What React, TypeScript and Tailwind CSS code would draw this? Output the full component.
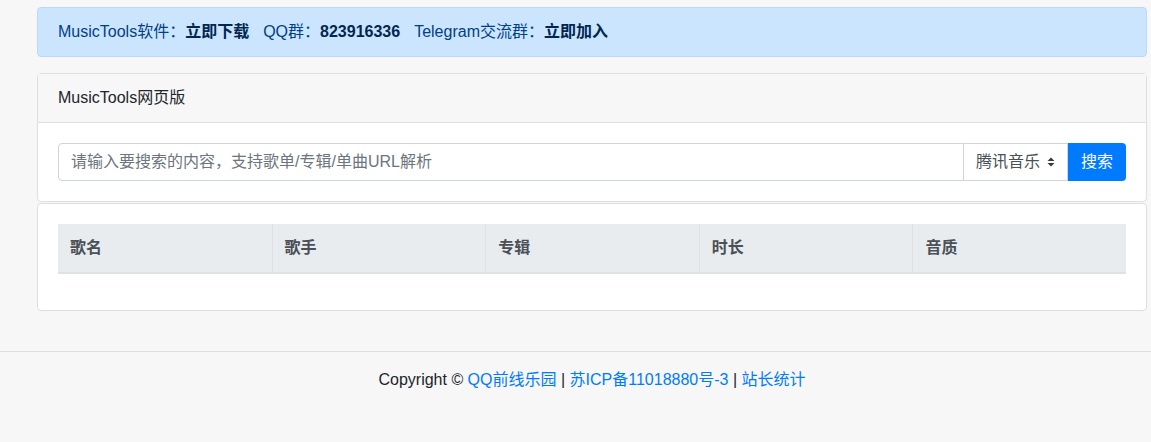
import React from "react";

const font = { fontFamily: '"Liberation Sans", Arial, "Noto Sans CJK SC", sans-serif' };

export default function App() {
  const cols = ["歌名", "歌手", "专辑", "时长", "音质"];
  return (
    <div className="min-h-[442px] bg-[#f7f7f7] text-[16px] leading-6 text-[#212529]" style={font}>
      <div className="pl-[37px] pr-[4px] pt-[7px]">
        <div className="rounded border border-[#b8daff] bg-[#cce5ff] px-5 py-3 text-[#004085]">
          MusicTools软件：<b className="text-[#002752]">立即下载</b>
          <span className="ml-[14px]">QQ群：</span>
          <b className="text-[#002752]">823916336</b>
          <span className="ml-[14px]">Telegram交流群：</span>
          <b className="text-[#002752]">立即加入</b>
        </div>

        <div className="mt-4 rounded border border-[#dfdfdf] bg-white">
          <div className="border-b border-[#dfdfdf] bg-[#f7f7f7] px-5 py-3">MusicTools网页版</div>
          <div className="p-5">
            <div className="flex h-[38px]">
              <input
                className="min-w-0 flex-1 rounded-l border border-[#ced4da] px-3 text-[16px] text-[#495057] placeholder:text-[#6c757d] outline-none"
                placeholder="请输入要搜索的内容，支持歌单/专辑/单曲URL解析"
                style={font}
              />
              <div className="flex w-[104px] items-center border border-l-0 border-[#ced4da] bg-white pl-3 text-[#495057]">
                <span>腾讯音乐</span>
                <svg className="ml-[7px]" width="8" height="10" viewBox="0 0 8 10">
                  <path d="M4 0.5 L7.5 4 H0.5 Z" fill="#343a40" />
                  <path d="M4 9.5 L7.5 6 H0.5 Z" fill="#343a40" />
                </svg>
              </div>
              <button className="w-[58px] rounded-r bg-[#007bff] text-white" style={font}>搜索</button>
            </div>
          </div>
        </div>

        <div className="mt-px rounded border border-[#dfdfdf] bg-white px-5 pb-5 pt-5">
          <div className="mb-4 grid grid-cols-5 border-b-2 border-[#dee2e6] bg-[#e9ecef]">
            {cols.map((c, i) => (
              <div
                key={c}
                className={`px-3 py-3 font-bold text-[#495057] ${i > 0 ? "border-l border-[#dee2e6]" : ""}`}
              >
                {c}
              </div>
            ))}
          </div>
        </div>
      </div>

      <div className="mt-10 border-t border-[#dedede] pt-4 pb-16">
        <div className="pl-[37px] pr-[4px] text-center text-[16px]">
          Copyright © <span className="text-[#007bff]">QQ前线乐园</span> | <span className="text-[#007bff]">苏ICP备11018880号-3</span> | <span className="text-[#007bff]">站长统计</span>
        </div>
      </div>
    </div>
  );
}
